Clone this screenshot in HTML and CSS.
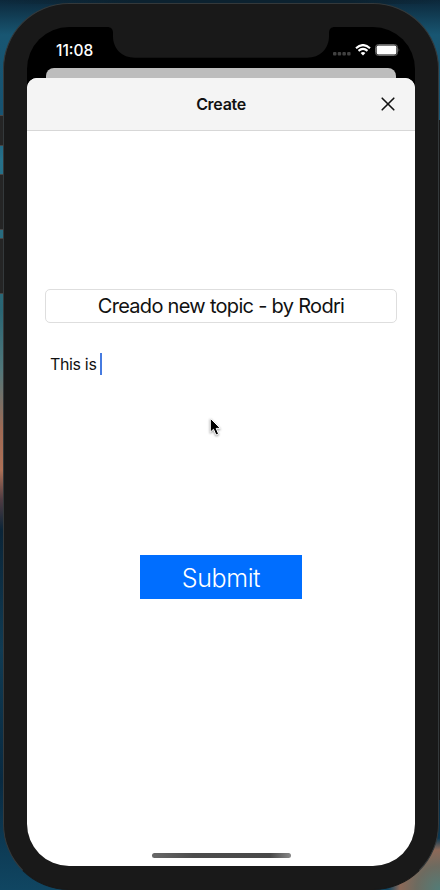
FILE: index.html
```
<!DOCTYPE html>
<html lang="en">
<head>
<meta charset="utf-8">
<meta name="viewport" content="width=device-width, initial-scale=1">
<title>Create</title>
<link rel="stylesheet" href="styles.css">
</head>
<body>
<div class="desktop">
  <span class="side-button mute"></span>
  <span class="side-button volume-up"></span>
  <span class="side-button volume-down"></span>
  <main class="phone">
    <div class="screen">
      <header class="status">
        <time class="clock">11:08</time>
        <svg class="notch" width="228" height="31" viewBox="0 0 228 31"><path d="M0 0C4 0 6 2 6 6V9C6 22 15 30.7 28 30.7H200C213 30.7 222 22 222 9V6C222 2 224 0 228 0Z" fill="#191919"/></svg>
        <div class="indicators">
          <svg width="18" height="4" viewBox="0 0 18 4" fill="#414141"><rect x="0" y="0" width="3.5" height="3.5" rx="1"/><rect x="4.7" y="0" width="3.5" height="3.5" rx="1"/><rect x="9.4" y="0" width="3.5" height="3.5" rx="1"/><rect x="14.1" y="0" width="3.5" height="3.5" rx="1"/></svg>
          <svg class="wifi" width="16" height="12" viewBox="0 0 16 12" fill="none" stroke="#fff" stroke-width="2.1"><path d="M1 4.2Q8-2.1 15 4.2M3.5 6.9Q8 2.9 12.5 6.9"/><path d="M5.6 8.9Q8 6.9 10.4 8.9L8 11.4Z" fill="#fff" stroke="none"/></svg>
          <svg class="battery" width="25" height="12" viewBox="0 0 25 12"><rect x=".5" y=".5" width="22" height="11" rx="3" fill="none" stroke="#666"/><rect x="1.6" y="1.6" width="19.8" height="8.8" rx="1.6" fill="#fff"/><path d="M23.6 4Q25 6 23.6 8Z" fill="#666"/></svg>
        </div>
      </header>
      <div class="back-card"></div>
      <section class="sheet">
        <header class="sheet-header">
          <h1>Create</h1>
          <button class="close" aria-label="Close"><svg width="14" height="14" viewBox="0 0 14 14" stroke="#111" stroke-width="1.6" stroke-linecap="round"><path d="M1.2 1.2L12.8 12.8M12.8 1.2L1.2 12.8"/></svg></button>
        </header>
        <div class="form">
          <div class="topic"><span>Creado new topic - by Rodri</span></div>
          <div class="message"><span class="message-text">This is</span><span class="caret"></span></div>
          <button class="submit"><span>Submit</span></button>
        </div>
        <div class="home-indicator"></div>
      </section>
    </div>
  </main>
  <svg class="pointer" width="14" height="20" viewBox="0 0 14 20"><path d="M1.3 1.2V15.2L4.5 12.3L7 18L9.6 16.9L7.2 11.4H11.3Z" fill="#000" stroke="#fff" stroke-width="1"/></svg>
</div>
</body>
</html>
```
FILE: styles.css
```
* { box-sizing: border-box; }
body {
  margin: 0;
  font-family: Inter, "Liberation Sans", sans-serif;
  color: #111;
}
button { border: 0; padding: 0; font: inherit; }
svg { display: block; }
.desktop {
  position: relative;
  width: 440px;
  height: 890px;
  padding: 3px 1px 0 3px;
  overflow: hidden;
  background:
    radial-gradient(circle at 440px 890px, #527d78 0, #6d6b60 24px, #8d6958 40px, transparent 52px),
    linear-gradient(90deg, transparent, #0c2230 30%, #0c2230 80%, transparent) 0 0 / 100% 4px no-repeat,
    linear-gradient(180deg, #0c283b 0, #185672 35px, #175371 110px, #26718a 160px, #2a6674 310px, #51777a 370px, #a06a54 430px, #ad7056 470px, #4e3b42 500px, #0b2538 530px, #103b53 650px, #092a41 780px, #104662 890px);
}
.desktop::before {
  content: "";
  position: absolute;
  top: 120px;
  right: 0;
  width: 4px;
  height: 680px;
  background: #191919;
}
.side-button {
  position: absolute;
  left: 0;
  width: 4px;
  background: #252525;
  border: solid #454545;
  border-width: 1px 0;
}
.mute { top: 115px; height: 31px; }
.volume-up { top: 174px; height: 56px; }
.volume-down { top: 238px; height: 56px; }
.phone {
  position: relative;
  height: 887px;
  padding: 23px;
  border: 1px solid #34393b;
  border-bottom-color: #191919;
  border-radius: 66px;
  background: #191919;
}
.screen {
  width: 388px;
  height: 839px;
  overflow: hidden;
  border-radius: 42px;
  background: #000;
}
.status {
  display: grid;
  grid-template-columns: 80px 228px 80px;
  height: 41px;
}
.clock {
  padding: 14px 0 0 29px;
  color: #fff;
  font-size: 15.5px;
  font-weight: 500;
  line-height: 19px;
}
.indicators {
  display: flex;
  align-items: flex-start;
  padding-top: 17px;
}
.indicators > :first-child { margin: 8px 0 0 -2px; }
.indicators > * { flex-shrink: 0; }
.wifi { margin-left: 4px; }
.battery { margin-left: 4px; }
.back-card {
  height: 10px;
  margin: 0 19px;
  border-radius: 8px 8px 0 0;
  background: #bdbdbd;
}
.sheet {
  display: flex;
  flex-direction: column;
  height: 788px;
  border-radius: 10px 10px 0 0;
  background: #fff;
}
.sheet-header {
  display: grid;
  grid-template-columns: 1fr auto 1fr;
  align-items: center;
  height: 53px;
  border-bottom: 1px solid #d7d7d7;
  border-radius: 10px 10px 0 0;
  background: #f4f4f4;
}
.sheet-header h1 {
  grid-column: 2;
  margin: 0;
  font-size: 16px;
  font-weight: 600;
  letter-spacing: -.3px;
}
.close {
  justify-self: end;
  margin-right: 20.5px;
  background: transparent;
}
.form {
  display: flex;
  flex-direction: column;
  padding: 158px 18px 0;
}
.topic {
  display: flex;
  align-items: center;
  justify-content: center;
  height: 34px;
  border: 1px solid #dedede;
  border-radius: 5px;
  font-size: 20px;
  letter-spacing: -.7px;
}
.message {
  display: flex;
  align-items: center;
  height: 22px;
  margin-top: 30px;
  padding-left: 5px;
  font-size: 16px;
  letter-spacing: -.35px;
}
.caret {
  width: 2px;
  height: 22px;
  margin-left: 3.5px;
  background: #467be0;
}
.submit {
  align-self: center;
  width: 162px;
  height: 44px;
  margin-top: 180px;
  background: #006eff;
  color: #fff;
  font-size: 25px;
  font-weight: 350;
  letter-spacing: -.4px;
}
.submit span {
  display: block;
  padding-top: 1px;
}
.home-indicator {
  width: 139px;
  height: 5px;
  margin: auto auto 8px;
  border-radius: 3px;
  background: linear-gradient(90deg, #686868, #4c4c4c 30%, #484848 85%, #888);
}
.pointer {
  position: absolute;
  top: 417px;
  left: 209px;
  filter: drop-shadow(0 1px 1px #0006);
}
```
